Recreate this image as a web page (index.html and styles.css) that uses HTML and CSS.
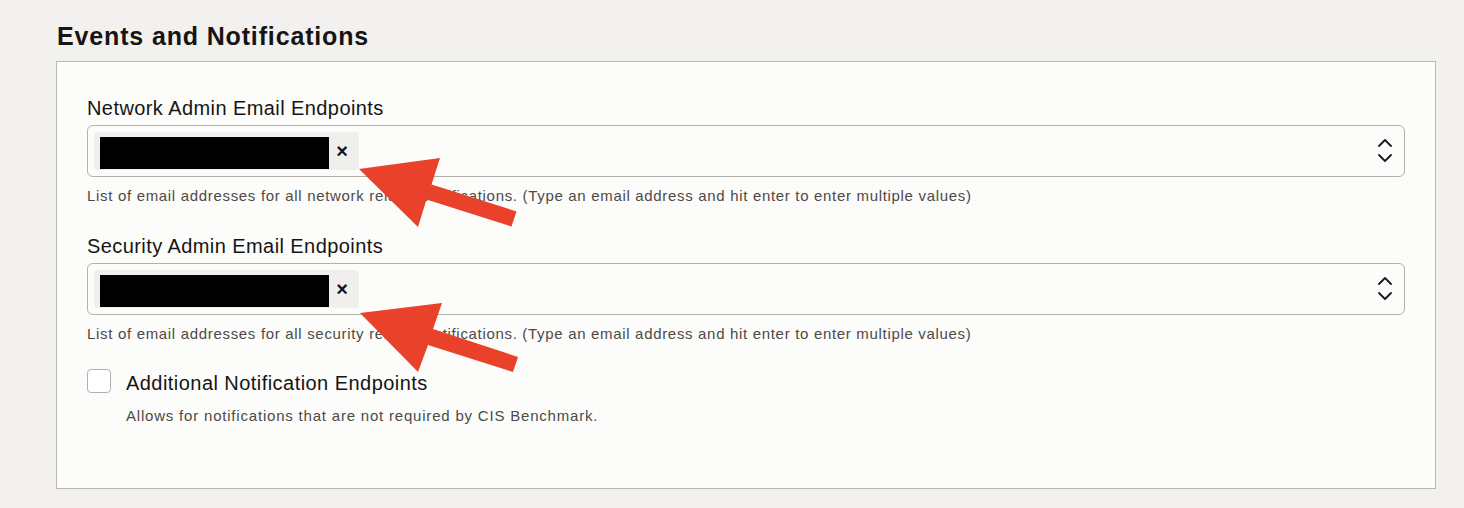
FILE: index.html
```html
<!DOCTYPE html>
<html lang="en">
<head>
<meta charset="utf-8">
<title>Events and Notifications</title>
<link rel="stylesheet" href="styles.css">
</head>
<body>
<div class="page">
  <h1 class="title">Events and Notifications</h1>
  <section class="panel">
    <div class="field">
      <label class="label">Network Admin Email Endpoints</label>
      <div class="select">
        <div class="chip"><span class="redact"></span><span class="chip-x">×</span></div>
        <svg class="updown" width="16" height="24" viewBox="0 0 16 24"><path d="M2 8 L8 2 L14 8 M2 17 L8 23 L14 17" fill="none" stroke="#1a1a1a" stroke-width="1.8" stroke-linecap="round" stroke-linejoin="round"/></svg>
      </div>
      <p class="help">List of email addresses for all network related notifications. (Type an email address and hit enter to enter multiple values)</p>
    </div>
    <div class="field">
      <label class="label">Security Admin Email Endpoints</label>
      <div class="select">
        <div class="chip"><span class="redact"></span><span class="chip-x">×</span></div>
        <svg class="updown" width="16" height="24" viewBox="0 0 16 24"><path d="M2 8 L8 2 L14 8 M2 17 L8 23 L14 17" fill="none" stroke="#1a1a1a" stroke-width="1.8" stroke-linecap="round" stroke-linejoin="round"/></svg>
      </div>
      <p class="help">List of email addresses for all security related notifications. (Type an email address and hit enter to enter multiple values)</p>
    </div>
    <div class="check-row">
      <span class="checkbox"></span>
      <div class="check-text">
        <div class="check-label">Additional Notification Endpoints</div>
        <p class="check-help">Allows for notifications that are not required by CIS Benchmark.</p>
      </div>
    </div>
  </section>
</div>
<svg class="arrows" width="1464" height="508" viewBox="0 0 1464 508">
  <polygon points="359,169 440,158 431.5,184.4 516.5,211.4 511.5,226.6 426.5,199.6 418,227" fill="#e9412a"/>
  <polygon points="360,313 442,303 433,329 518,357 513,372 428,345 418,372" fill="#e9412a"/>
</svg>
</body>
</html>
```
FILE: styles.css
```css
html, body {
  margin: 0;
  padding: 0;
  background: #f2f1ef;
  font-family: "Liberation Sans", Arial, Helvetica, sans-serif;
  color: #161513;
}
.page {
  padding: 0 28px 0 56px;
  width: 1380px;
}
.title {
  margin: 0;
  padding-top: 21px;
  font-size: 25px;
  line-height: 30px;
  letter-spacing: 0.85px;
  font-weight: bold;
  height: 40px;
  padding-left: 1px;
}
.panel {
  box-sizing: border-box;
  width: 1380px;
  height: 428px;
  background: #fcfcfb;
  border: 1px solid #bcb7b2;
  padding: 35px 30px 0 30px;
}
.field {
  margin-bottom: 29px;
}
.label {
  display: block;
  font-size: 20px;
  line-height: 22px;
  letter-spacing: 0.42px;
  color: #161513;
  margin-bottom: 6px;
}
.select {
  box-sizing: border-box;
  height: 52px;
  border: 1px solid #b5b0ab;
  border-radius: 6px;
  display: flex;
  align-items: center;
  padding: 0 11px 0 6px;
  background: #fcfcfb;
}
.chip {
  box-sizing: border-box;
  width: 265px;
  height: 38px;
  background: #f1efed;
  border-radius: 4px;
  display: flex;
  align-items: flex-end;
  padding: 0 0 1px 6px;
}
.redact {
  width: 229px;
  height: 32px;
  background: #000;
}
.chip-x {
  align-self: center;
  margin-left: 6px;
  font-size: 20px;
  font-weight: bold;
  line-height: 20px;
  width: 14px;
  text-align: center;
  color: #161513;
}
.updown {
  margin-left: auto;
  margin-top: -2px;
}
.help {
  margin: 9px 0 0 0;
  font-size: 15px;
  line-height: 20px;
  letter-spacing: 0.68px;
  color: #4d4a47;
}
.check-row {
  display: flex;
  margin-top: -4px;
}
.checkbox {
  box-sizing: border-box;
  width: 24px;
  height: 24px;
  border: 1px solid #b5b0ab;
  border-radius: 4px;
  background: #fff;
  flex: none;
}
.check-text {
  margin-left: 15px;
}
.check-label {
  font-size: 20px;
  line-height: 22px;
  letter-spacing: 0.45px;
  margin-top: 3px;
}
.check-help {
  margin: 12px 0 0 0;
  font-size: 15px;
  line-height: 20px;
  letter-spacing: 0.8px;
  color: #4d4a47;
}
.arrows {
  position: absolute;
  left: 0;
  top: 0;
  pointer-events: none;
}
```
